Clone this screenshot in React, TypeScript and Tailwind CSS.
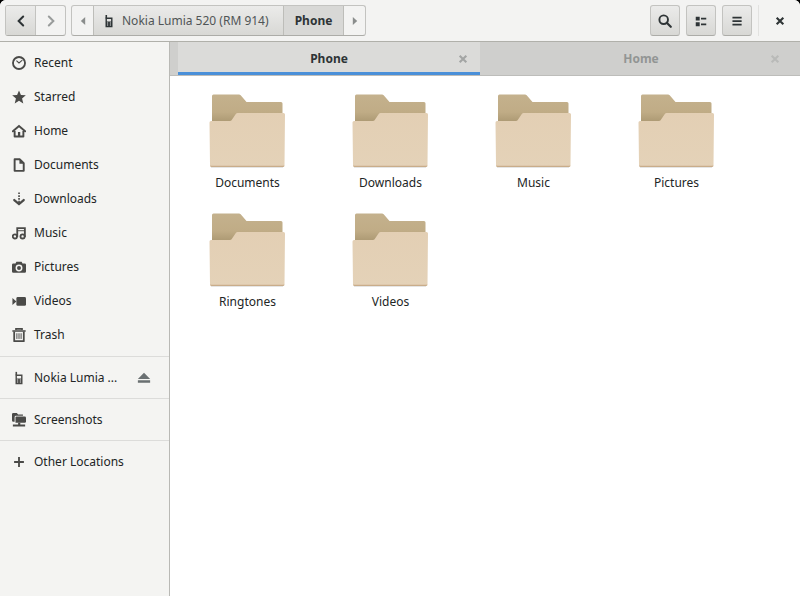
import React from "react";

type IconProps = { className?: string };

const Svg = ({ className = "size-3.5", children }: IconProps & { children: React.ReactNode }) => (
  <svg viewBox="0 0 16 16" className={`${className} shrink-0`} fill="currentColor" aria-hidden="true">
    {children}
  </svg>
);

const ClockIcon = () => (
  <Svg>
    <circle cx="8" cy="8" r="6.9" fill="none" stroke="currentColor" strokeWidth="2.1" />
    <path d="M5 5.2 8 8l3.8-3.2" fill="none" stroke="currentColor" strokeWidth="1.2" />
  </Svg>
);

const StarIcon = () => (
  <Svg>
    <path d="M8 .5l2.2 5.2 5.6.4-4.3 3.6 1.4 5.6L8 12.3l-4.9 3 1.4-5.6L.2 6.1l5.6-.4z" />
  </Svg>
);

const HomeIcon = () => (
  <Svg>
    <path d="M1 8.400 8 2.400l7 6" fill="none" stroke="currentColor" strokeWidth="2.200" strokeLinecap="round" />
    <path d="M3 8v6.200h10V8" fill="none" stroke="currentColor" strokeWidth="2.200" strokeLinejoin="round" />
    <path d="M6.800 9.200h2.600v5H6.800z" />
  </Svg>
);

const DocumentIcon = () => (
  <Svg>
    <path d="M3 1.500h6l4.400 4.400v8.800H3z" fill="none" stroke="currentColor" strokeWidth="2.200" strokeLinejoin="round" />
    <path d="M8.500 1.500v5h5z" />
  </Svg>
);

const DownloadIcon = () => (
  <Svg>
    <path d="M7.100.5h1.900v1.900H7.100zM7.100 3.700h1.900v1.900H7.100zM7.100 6.900h1.900v1.900H7.100zM7.100 10h1.900v3H7.100z" />
    <path d="M2.600 9.200 8 13.800l5.400-4.600" fill="none" stroke="currentColor" strokeWidth="2.600" strokeLinecap="round" />
  </Svg>
);

const MusicIcon = () => (
  <Svg>
    <g fill="none" stroke="currentColor" strokeWidth="2.100">
      <circle cx="3.300" cy="11.900" r="2.400" />
      <circle cx="12.100" cy="11.900" r="2.400" />
      <path d="M6 12.500V2.400h8.700v10.100" />
      <path d="M6 5.400h8.700" strokeWidth="1.100" />
    </g>
  </Svg>
);

const CameraIcon = () => (
  <Svg>
    <path d="M5 2h6l1 2h2.500q1.500 0 1.500 1.500v7.500q0 1.500-1.500 1.500h-13Q0 14.500 0 13V5.500Q0 4 1.500 4H4z" />
    <circle cx="8" cy="9.200" r="3.100" fill="none" stroke="#f4f4f2" strokeWidth="1.700" />
  </Svg>
);

const VideoIcon = () => (
  <Svg>
    <rect x="5" y="3.500" width="11" height="10" rx="1.600" />
    <path d="M.5 4.500 5 8.500.5 12.500z" />
  </Svg>
);

const TrashIcon = () => (
  <Svg>
    <path d="M4.500 2.200V1h7v1.200M.4 3.400h15.200" fill="none" stroke="currentColor" strokeWidth="1.800" />
    <path d="M2.500 4v11h11V4" fill="none" stroke="currentColor" strokeWidth="2" strokeLinejoin="round" />
    <path d="M5.600 6v6.500M8 6v6.500M10.400 6v6.500" fill="none" stroke="currentColor" strokeWidth="1.100" />
  </Svg>
);

const PhoneIcon = () => (
  <Svg>
    <path d="M4 1h1.800v4H4z" />
    <path fillRule="evenodd" d="M4 4h8v11H4zM5.600 5.600v3h4.800v-3z" />
    <path d="M5.800 10.300h1.200M9 10.300h1.200M5.800 12.600h1.200M9 12.600h1.200" stroke="#f3f3f1" strokeWidth="1.200" />
  </Svg>
);

const NetworkFolderIcon = () => (
  <Svg>
    <path d="M0 1.500Q0 0 1.500 0H5.500L7 1.600h5.500V3H4.500Q3 3 3 4.500V10H1.500Q0 10 0 8.500z" />
    <path d="M4 5.200Q4 4 5 4h9.500Q16 4 16 5.500v4.200q0 1.500-1.500 1.500H4z" />
    <path d="M7 11.200h2.500v2H15V15.500H1v-2.300h6z" />
  </Svg>
);

const PlusIcon = () => (
  <Svg>
    <path d="M8 2.400v11.200M2.400 8h11.200" fill="none" stroke="currentColor" strokeWidth="2.100" />
  </Svg>
);

const EjectIcon = () => (
  <Svg>
    <path d="M8 2 15 9.200H1zM1 10.600h14v2.800H1z" />
  </Svg>
);

const SearchIcon = () => (
  <Svg>
    <circle cx="6.500" cy="6.500" r="4.900" fill="none" stroke="currentColor" strokeWidth="2.200" />
    <path d="m10 10 4.600 4.600" stroke="currentColor" strokeWidth="2.500" strokeLinecap="round" />
  </Svg>
);

const ListIcon = () => (
  <Svg>
    <path d="M2 3h4.500v4.500H2zM2 9.500h4.500V14H2zM8 4.300h6v2H8zM8 10.800h6v2H8z" />
  </Svg>
);

const MenuIcon = () => (
  <Svg>
    <path d="M2.800 3h10.500v2H2.800zM2.800 7.100h10.500v2H2.800zM2.800 11.200h10.500v2H2.800z" />
  </Svg>
);

const ChevronIcon = ({ left }: { left?: boolean }) => (
  <Svg>
    <path
      d={left ? "M10.500 2.800 5.300 8l5.200 5.200" : "M5.500 2.800 10.700 8l-5.200 5.200"}
      fill="none"
      stroke="currentColor"
      strokeWidth="2.300"
      strokeLinecap="round"
    />
  </Svg>
);

const TriangleIcon = ({ left }: { left?: boolean }) => (
  <Svg>
    <path d={left ? "M10.500 3.500v9L5.500 8z" : "M5.500 3.500v9L10.500 8z"} />
  </Svg>
);

const CrossIcon = () => (
  <Svg>
    <path d="m4.200 4.200 7.600 7.600M11.800 4.200l-7.600 7.600" stroke="currentColor" strokeWidth="2.400" />
  </Svg>
);

const FolderArt = () => (
  <svg viewBox="1 0 78 76" className="h-[76px] w-[78px]" aria-hidden="true">
    <defs>
      <linearGradient id="folder-back" x1="0" y1="0" x2="0" y2="1">
        <stop offset="0" stopColor="#c4b18d" />
        <stop offset="0.300" stopColor="#c0ac86" />
        <stop offset="0.480" stopColor="#ab9872" />
      </linearGradient>
      <linearGradient id="folder-front" x1="0" y1="0" x2="0" y2="1">
        <stop offset="0" stopColor="#e3cfb4" />
        <stop offset="1" stopColor="#e4d2b8" />
      </linearGradient>
    </defs>
    <path d="M3 73.500h72v1.500H3z" fill="#000" opacity="0.100" />
    <path d="M4 3q0-1.500 1.500-1.500H31q1 0 1.700.8L38.500 9H73q1.500 0 1.500 1.500V60H4z" fill="url(#folder-back)" />
    <path
      d="M1.500 29.500q0-1.500 1.500-1.500H22q1 0 1.600-.8L27.800 21q.7-1 1.800-1H75.500q1.500 0 1.500 1.500L76.500 72q0 2-1.500 2H3.500Q2 74 2 72z"
      fill="url(#folder-front)"
    />
    <path d="M2 71.500q0 2.500 1.500 2.500h71.500q1.500 0 1.500-2.500v.5q0 .8-1.500.8H3.500Q2 72.800 2 72z" fill="#c9ad8a" />
  </svg>
);

const places = [
  { name: "Recent", Icon: ClockIcon },
  { name: "Starred", Icon: StarIcon },
  { name: "Home", Icon: HomeIcon },
  { name: "Documents", Icon: DocumentIcon },
  { name: "Downloads", Icon: DownloadIcon },
  { name: "Music", Icon: MusicIcon },
  { name: "Pictures", Icon: CameraIcon },
  { name: "Videos", Icon: VideoIcon },
  { name: "Trash", Icon: TrashIcon },
];

const folders = ["Documents", "Downloads", "Music", "Pictures", "Ringtones", "Videos"];

const Place = ({ name, Icon }: { name: string; Icon: () => React.ReactElement }) => (
  <a href="#" className="flex h-[34px] items-center gap-2 pl-3 text-[#4a4a48]">
    <Icon />
    <span className="whitespace-nowrap text-[#222525]">{name}</span>
  </a>
);

const Separator = () => <hr className="my-[3px] border-0 border-t border-[#dcdcda]" />;

const raised = "bg-linear-to-b from-[#ebebea] to-[#d8d8d5]";

const ToolButton = ({ label, children }: { label: string; children: React.ReactNode }) => (
  <button
    aria-label={label}
    className={`flex h-[31px] w-[30px] items-center justify-center rounded-[3px] border border-[#c3c3c0] border-b-[#acaca8] ${raised}`}
  >
    {children}
  </button>
);

const Tab = ({ name, active }: { name: string; active?: boolean }) => (
  <div
    className={`flex min-w-0 flex-1 items-center border-b-3 px-2.5 pt-[3px] ${
      active ? "border-[#4a90d9] bg-[#dbdbd9] text-[#2e3436]" : "border-transparent text-[#929594]"
    }`}
  >
    <span className="w-3.5" />
    <button role="tab" aria-selected={!!active} className="h-full min-w-0 flex-1 font-bold">
      {name}
    </button>
    <button aria-label={`Close ${name}`} className={active ? "w-3.5 text-[#a3a5a4]" : "w-3.5 text-[#b9bab8]"}>
      <CrossIcon />
    </button>
  </div>
);

export default function App() {
  return (
    <div className="bg-black font-['Noto_Sans',sans-serif] text-xs leading-5 text-[#2e3436]">
      <div className="flex min-h-screen flex-col overflow-hidden rounded-t-[6px] bg-white">
        <header className="flex h-[42px] items-center border-b border-[#b0b0aa] bg-[#f3f3f2] px-[5px]">
          <div className="flex h-[31px] overflow-hidden rounded-[3px] border border-[#c3c3c0] border-b-[#acaca8]">
            <button
              aria-label="Back"
              className={`flex w-[30px] items-center justify-center border-r border-[#c3c3c0] ${raised}`}
            >
              <ChevronIcon left />
            </button>
            <button
              aria-label="Forward"
              disabled
              className="flex w-[29px] items-center justify-center text-[#9a9d9c]"
            >
              <ChevronIcon />
            </button>
          </div>
          <nav
            aria-label="Path"
            className="ml-[5px] flex h-[31px] overflow-hidden rounded-[3px] border border-[#c3c3c0] border-b-[#acaca8]"
          >
            <button aria-label="Scroll path left" className="flex w-[21px] items-center justify-center text-[#8a8d8c]">
              <TriangleIcon left />
            </button>
            <button
              className={`flex w-[191px] items-center gap-1.5 border-x border-[#bdbdb9] pl-2 whitespace-nowrap text-[#505556] ${raised}`}
            >
              <span className="text-[#2e3436]">
                <PhoneIcon />
              </span>
              Nokia Lumia 520 (RM 914)
            </button>
            <button className="w-[60px] border-r border-[#bdbdb9] bg-[#d8d8d6] font-bold">Phone</button>
            <button aria-label="Scroll path right" className="flex w-[21px] items-center justify-center text-[#8a8d8c]">
              <TriangleIcon />
            </button>
          </nav>
          <div className="ml-auto flex items-center gap-1.5">
            <ToolButton label="Search">
              <SearchIcon />
            </ToolButton>
            <ToolButton label="View as list">
              <ListIcon />
            </ToolButton>
            <ToolButton label="Menu">
              <MenuIcon />
            </ToolButton>
            <span className="h-[31px] w-px bg-[#e2e2e0]" />
            <button aria-label="Close window" className="flex h-[31px] w-[30px] items-center justify-center">
              <CrossIcon />
            </button>
          </div>
        </header>

        <div className="flex flex-1">
          <aside className="w-[170px] shrink-0 border-r border-[#b9b9b5] bg-[#f4f4f2] pt-1">
            <nav aria-label="Places" className="flex flex-col pb-px">
              {places.map((p) => (
                <Place key={p.name} {...p} />
              ))}
            </nav>
            <Separator />
            <div className="flex items-center justify-between pt-px pr-[18px]">
              <Place name="Nokia Lumia ..." Icon={PhoneIcon} />
              <button aria-label="Eject" className="text-[#6a7072]">
                <EjectIcon />
              </button>
            </div>
            <Separator />
            <div className="pt-px">
              <Place name="Screenshots" Icon={NetworkFolderIcon} />
            </div>
            <Separator />
            <div className="pt-px">
              <Place name="Other Locations" Icon={PlusIcon} />
            </div>
          </aside>

          <main className="min-w-0 flex-1">
            <div role="tablist" className="flex h-[34px] gap-2.5 border-b border-[#bdbdba] bg-[#cfcfcd] px-2">
              <Tab name="Phone" active />
              <Tab name="Home" />
            </div>
            <ul className="grid grid-cols-[repeat(auto-fill,143px)] gap-y-[19px] pt-[17px] pl-1.5">
              {folders.map((f) => (
                <li key={f} className="flex flex-col items-center gap-1">
                  <FolderArt />
                  <span className="text-[#222525]">{f}</span>
                </li>
              ))}
            </ul>
          </main>
        </div>
      </div>
    </div>
  );
}
